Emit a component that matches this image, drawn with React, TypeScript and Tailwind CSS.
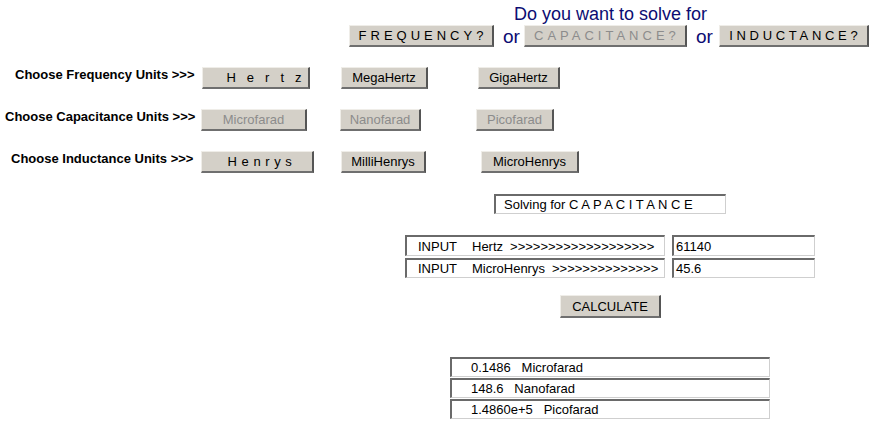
import React from "react"

const font = { fontFamily: '"Liberation Sans", Arial, sans-serif' }

function Btn({
  className,
  children,
  disabled,
}: {
  className: string
  children: React.ReactNode
  disabled?: boolean
}) {
  return (
    <button
      className={
        "flex h-[22px] shrink-0 items-center justify-center bg-[#d4d0c8] text-[13px] leading-none border-t border-l border-t-[#efede8] border-l-[#efede8] border-r-2 border-b-2 border-r-[#555555] border-b-[#6f6f6f] " +
        (disabled ? "text-[#8c8c8c] " : "text-black ") +
        className
      }
    >
      {children}
    </button>
  )
}

function Inset({ className, children }: { className: string; children: React.ReactNode }) {
  return (
    <div
      className={
        "flex items-center overflow-hidden whitespace-nowrap bg-white text-[13px] leading-none text-black border-t-2 border-l-2 border-t-[#6a6a6a] border-l-[#6a6a6a] border-r border-b border-r-[#cfcfcf] border-b-[#cfcfcf] " +
        className
      }
    >
      {children}
    </div>
  )
}

function UnitRow({
  label,
  labelPad,
  className,
  children,
}: {
  label: string
  labelPad: string
  className: string
  children: React.ReactNode
}) {
  return (
    <div className={"flex items-start " + className}>
      <div className={"w-[201px] shrink-0 whitespace-nowrap pt-[1px] text-[13px] font-bold leading-none text-black " + labelPad}>
        {label}
      </div>
      {children}
    </div>
  )
}

export default function App() {
  return (
    <div className="h-[429px] w-[882px] overflow-hidden bg-white" style={font}>
      {/* heading */}
      <div className="pl-[514px] pt-[4px] text-[18px] leading-[20px] text-[#0c0c72]">Do you want to solve for</div>

      {/* solve-for choice */}
      <div className="mt-[1px] flex items-center pl-[349px]">
        <Btn className="w-[145px] pl-[4px] tracking-[4px]">FREQUENCY?</Btn>
        <span className="ml-[9px] text-[19px] leading-none text-[#0c0c72]">or</span>
        <Btn disabled className="ml-[4px] w-[163px] pl-[4px] tracking-[4px]">CAPACITANCE?</Btn>
        <span className="ml-[9px] text-[19px] leading-none text-[#0c0c72]">or</span>
        <Btn className="ml-[6px] w-[150px] pl-[4px] tracking-[3.7px]">INDUCTANCE?</Btn>
      </div>

      <UnitRow label="Choose Frequency Units >>>" labelPad="pl-[15px]" className="mt-[20px]">
        <Btn className="ml-[1px] w-[108px] pl-[28px] tracking-[11px]">Hertz</Btn>
        <Btn className="ml-[31px] w-[87px]">MegaHertz</Btn>
        <Btn className="ml-[50px] w-[82px]">GigaHertz</Btn>
      </UnitRow>

      <UnitRow label="Choose Capacitance Units >>>" labelPad="pl-[5px]" className="mt-[20px]">
        <Btn disabled className="w-[106px]">Microfarad</Btn>
        <Btn disabled className="ml-[33px] w-[81px]">Nanofarad</Btn>
        <Btn disabled className="ml-[55px] w-[78px]">Picofarad</Btn>
      </UnitRow>

      <UnitRow label="Choose Inductance Units >>>" labelPad="pl-[11px]" className="mt-[20px]">
        <Btn className="w-[113px] pl-[10px] tracking-[4.6px]">Henrys</Btn>
        <Btn className="ml-[27px] w-[85px]">MilliHenrys</Btn>
        <Btn className="ml-[55px] w-[98px]">MicroHenrys</Btn>
      </UnitRow>

      {/* status */}
      <div className="mt-[21px] pl-[494px]">
        <Inset className="h-[20px] w-[232px] pl-[8px]">Solving for C A P A C I T A N C E</Inset>
      </div>

      {/* inputs */}
      <div className="mt-[21px] flex flex-col gap-[2px] pl-[405px]">
        <div className="flex">
          <Inset className="h-[21px] w-[260px] pl-[11px]">
            <span>INPUT</span>
            <span className="ml-[15px]">Hertz</span>
            <span className="ml-[7px]">&gt;&gt;&gt;&gt;&gt;&gt;&gt;&gt;&gt;&gt;&gt;&gt;&gt;&gt;&gt;&gt;&gt;&gt;&gt;</span>
          </Inset>
          <Inset className="ml-[7px] h-[21px] w-[143px] pl-[2px]">61140</Inset>
        </div>
        <div className="flex">
          <Inset className="h-[20px] w-[260px] pl-[11px]">
            <span>INPUT</span>
            <span className="ml-[15px]">MicroHenrys</span>
            <span className="ml-[7px]">&gt;&gt;&gt;&gt;&gt;&gt;&gt;&gt;&gt;&gt;&gt;&gt;&gt;&gt;</span>
          </Inset>
          <Inset className="ml-[7px] h-[20px] w-[143px] pl-[2px]">45.6</Inset>
        </div>
      </div>

      <div className="mt-[17px] pl-[560px]">
        <Btn className="h-[23px] w-[101px]">CALCULATE</Btn>
      </div>

      {/* results */}
      <div className="mt-[39px] flex flex-col gap-[1px] pl-[450px]">
        <Inset className="h-[20px] w-[320px] pl-[19px]">0.1486&nbsp;&nbsp;&nbsp;Microfarad</Inset>
        <Inset className="h-[20px] w-[320px] pl-[19px]">148.6&nbsp;&nbsp;&nbsp;Nanofarad</Inset>
        <Inset className="h-[20px] w-[320px] pl-[19px]">1.4860e+5&nbsp;&nbsp;&nbsp;Picofarad</Inset>
      </div>
    </div>
  )
}
